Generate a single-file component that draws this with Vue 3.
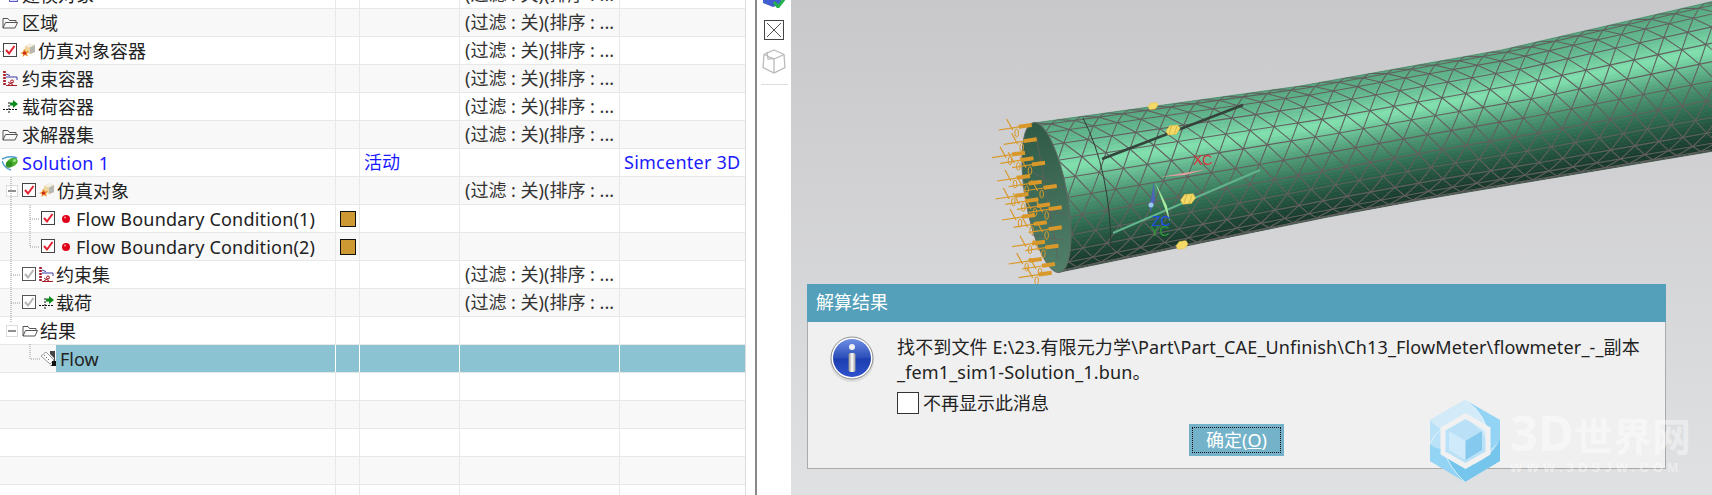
<script setup>
const filter = '(过滤 : 关)(排序 : ...'

const rows = [
  { pad: 3, label: '建模对象', filter: true, icons: ['model'], gap: 4 },
  { pad: 2, label: '区域', filter: true, icons: ['folder'], gap: 4 },
  { pad: 3, label: '仿真对象容器', filter: true, icons: ['check', 'sim'] },
  { pad: 3, label: '约束容器', filter: true, icons: ['cons'], gap: 4 },
  { pad: 3, label: '载荷容器', filter: true, icons: ['load'], gap: 4 },
  { pad: 2, label: '求解器集', filter: true, icons: ['folder'], gap: 4 },
  { pad: 2, label: 'Solution 1', blue: true, status: '活动', solver: 'Simcenter 3D', icons: ['solution'], gap: 4 },
  { pad: 6, label: '仿真对象', filter: true, icons: ['minus', 'check', 'sim'] },
  { pad: 41, label: 'Flow Boundary Condition(1)', swatch: true, icons: ['check', 'dot'] },
  { pad: 41, label: 'Flow Boundary Condition(2)', swatch: true, icons: ['check', 'dot'] },
  { pad: 22, label: '约束集', filter: true, icons: ['checkoff', 'cons'] },
  { pad: 22, label: '载荷', filter: true, icons: ['checkoff', 'load'] },
  { pad: 6, label: '结果', icons: ['minus', 'folder'] },
  { pad: 41, label: 'Flow', selected: true, icons: ['result'] },
  {}, {}, {}, {}, {}
]

// pipe outline, taken from the reference
const topEdge = [[0, 123], [0.37, 86], [0.65, 50], [1, -8]]
const botEdge = [[0, 272], [0.35, 220], [0.5, 200], [1, 140]]

function edgeY(edge, s) {
  for (let i = 1; i < edge.length; i++) {
    if (s <= edge[i][0]) {
      const k = (s - edge[i - 1][0]) / (edge[i][0] - edge[i - 1][0])
      return edge[i - 1][1] + (edge[i][1] - edge[i - 1][1]) * k
    }
  }
  return edge[edge.length - 1][1]
}

function point(s, v, bulge) {
  const tx = 1033 + s * 720
  const bx = 1060 + s * 720
  const c = Math.max(0, Math.min(1, s))
  const ty = edgeY(topEdge, c)
  const by = edgeY(botEdge, c)
  const x = tx + (bx - tx) * v + bulge * Math.sqrt(Math.max(0, v * (1 - v))) * 2
  return [x, ty + (by - ty) * v]
}

const shades = [
  [0, [84, 165, 125]], [0.15, [100, 185, 145]], [0.32, [130, 225, 175]], [0.52, [80, 156, 120]],
  [0.72, [46, 106, 79]], [0.9, [28, 68, 52]], [1, [22, 52, 40]]
]

function shade(v) {
  for (let i = 1; i < shades.length; i++) {
    if (v <= shades[i][0]) {
      const k = (v - shades[i - 1][0]) / (shades[i][0] - shades[i - 1][0])
      const c = shades[i - 1][1].map((a, n) => Math.round(a + (shades[i][1][n] - a) * k))
      return `rgb(${c.join(',')})`
    }
  }
  return 'rgb(22,52,40)'
}

const stations = [0, 0.2, 0.37, 0.5, 0.65, 0.8, 1]
const bands = []
for (let i = 0; i < 40; i++) {
  const a = i / 40
  const b = (i + 1) / 40
  const up = stations.map((s) => point(s, a, 0).join(','))
  const down = stations.slice().reverse().map((s) => point(s, b, 0).join(','))
  bands.push({ fill: shade(a + 0.0125), points: [...up, ...down].join(' ') })
}

const pipeClip = [
  ...stations.map((s) => point(s, 0, 0).join(',')),
  ...stations.slice().reverse().map((s) => point(s, 1, 0).join(','))
].join(' ')

// triangle mesh: lines along the axis and two diagonal families
const N = 12
const cell = 24 / 720
const bulge = 21
const meshLines = []
const lat = (j) => (1 - Math.cos((j / N) * Math.PI)) / 2
for (let j = 1; j < N; j++) {
  const pts = stations.map((s) => point(s, lat(j), bulge).join(','))
  meshLines.push(pts.join(' '))
}
for (let i = -7; i < 32; i++) {
  const left = []
  const right = []
  for (let j = 0; j <= N; j++) {
    left.push(point(i * cell + (j * cell) / 2, lat(j), bulge).join(','))
    right.push(point(i * cell + ((N - j) * cell) / 2, lat(j), bulge).join(','))
  }
  meshLines.push(left.join(' '), right.join(' '))
}

// arrow tips on the pipe's open end
const arrows = [
  [245, 105], [260, 148], [225, 188], [285, 218], [250, 205], [240, 258], [275, 275], [320, 288],
  [235, 312], [265, 328], [300, 343], [335, 352], [255, 375], [290, 397], [335, 412], [285, 455],
  [325, 467], [275, 507], [315, 522], [305, 548]
].map(([x, y]) => ({ x: 950 + x / 3, y: 90 + y / 3 }))

const marks = [
  { x: 1173, y: 130, r: 7 },
  { x: 1188, y: 199, r: 7.5 },
  { x: 1153, y: 106, r: 5 },
  { x: 1182, y: 245, r: 6 }
].map((m) => ({
  ...m,
  points: [[-1, 0.15], [-0.45, -0.6], [0.7, -0.7], [1, -0.15], [0.45, 0.6], [-0.7, 0.7]]
    .map(([a, b]) => `${m.x + a * m.r},${m.y + b * m.r}`)
    .join(' ')
}))
</script>

<template>
  <div class="app">
    <svg class="defs" width="0" height="0">
      <symbol id="model" viewBox="0 0 15 15">
        <rect x="6.500" y="5.500" width="8" height="9" fill="#dfe0f5" stroke="#5a5ac8" />
        <path d="M8 10h5M8 12.500h5" stroke="#5a5ac8" />
      </symbol>
      <symbol id="folder" viewBox="0 0 16 16">
        <path d="M1 13V3.5h5l1.5 2H14v2M1 13l2.5-5.5H15.5L13 13Z" fill="none" stroke="#555" stroke-width="1" />
      </symbol>
      <symbol id="check" viewBox="0 0 15 15">
        <rect x=".5" y=".5" width="13" height="13" fill="#fff" stroke="#444" />
        <path d="M3 7l3 3.5 5.5-7.5" fill="none" stroke="#e3212f" stroke-width="2" />
      </symbol>
      <symbol id="checkoff" viewBox="0 0 15 15">
        <rect x=".5" y=".5" width="13" height="13" fill="#fff" stroke="#555" />
        <path d="M3 7l3 3.5 5.5-7.5" fill="none" stroke="#b5b5b5" stroke-width="2" />
      </symbol>
      <symbol id="minus" viewBox="0 0 12 12">
        <rect x=".5" y=".5" width="11" height="11" fill="#fff" stroke="#ddd" />
        <path d="M2 6h8" stroke="#222" />
      </symbol>
      <symbol id="sim" viewBox="0 0 15 15">
        <path d="M5 3l5-2.500 5 1.500v7l-5 2-5-2Z" fill="#ecd49a" />
        <path d="M5 3l5-2.500 5 1.500-5 2.500Z" fill="#f2efe4" />
        <path d="M10 4.500l5-2.500v7l-5 2Z" fill="#b8b8b0" />
        <path d="M0 10l3-1 1-3.500 2 3 3-.5-2 2.500 1 3-3-1.500-2.500 2 .5-3Z" fill="#ef8a24" />
        <circle cx="4.500" cy="10" r="1.600" fill="#c8281e" />
      </symbol>
      <symbol id="cons" viewBox="0 0 15 15">
        <path d="M1.500 0v15" stroke="#a81c2a" stroke-width="2.600" stroke-dasharray="2 1" />
        <path d="M3 6h11v3" fill="none" stroke="#3a3aa8" />
        <path d="M3 3l4 1.500" stroke="#3a3aa8" />
        <path d="M5 11l5 3M10 11l-5 3M3 14.500h11" stroke="#a81c2a" fill="none" />
        <circle cx="9" cy="10.500" r="1.500" fill="none" stroke="#a81c2a" />
      </symbol>
      <symbol id="load" viewBox="0 0 15 15">
        <path d="M0 10.500h15M6 3v12" stroke="#111" stroke-dasharray="2 1" fill="none" />
        <path d="M7 3.500h3V1l5 4-5 4V6.500H7Z" fill="#0e8a1c" />
      </symbol>
      <symbol id="solution" viewBox="0 0 16 16">
        <path d="M0 4c4-2 10-3 15-1-3 0-5 1-7 2M0 6c2 6 5 8 9 9" fill="none" stroke="#4f9fcf" stroke-width="1.500" />
        <ellipse cx="10" cy="7.500" rx="6" ry="4" transform="rotate(-25 10 7.500)" fill="#49b02c" />
        <circle cx="7" cy="9.500" r="3.200" fill="#2f8f22" />
        <circle cx="12.500" cy="5.500" r="1.600" fill="#9ae27f" />
      </symbol>
      <symbol id="dot" viewBox="0 0 8 8">
        <circle cx="4" cy="4" r="4" fill="#e0001c" />
        <circle cx="3" cy="2.600" r="1" fill="#ff9a9a" />
      </symbol>
      <symbol id="result" viewBox="0 0 15 15">
        <path d="M0 5l5-4 8 8-4 4Z" fill="#fff" stroke="#999" />
        <path d="M3 5l1-1M5 7l1-1M7 9l1-1" stroke="#777" />
        <path d="M9 0h5v15H9l4-3V7L9 3Z" fill="#444" />
        <path d="M11 10h4v5h-4Z" fill="#111" />
      </symbol>
      <linearGradient id="infoFill" x1="0" y1="0" x2="0" y2="1">
        <stop offset="0" stop-color="#6f8fe4" />
        <stop offset=".5" stop-color="#2a4db8" />
        <stop offset=".52" stop-color="#1c3eb0" />
        <stop offset="1" stop-color="#2f52cc" />
      </linearGradient>
      <linearGradient id="infoBar" x1="0" y1="0" x2="1" y2="0">
        <stop offset="0" stop-color="#8b8b8b" />
        <stop offset=".5" stop-color="#fff" />
        <stop offset="1" stop-color="#9a9a9a" />
      </linearGradient>
      <linearGradient id="capFill" x1="0" y1="0" x2="0" y2="1">
        <stop offset="0" stop-color="#2f5a46" />
        <stop offset="1" stop-color="#517f69" />
      </linearGradient>
    </svg>

    <section class="tree">
      <div
        v-for="(row, i) in rows"
        :key="i"
        class="row"
        :class="{ odd: i % 2 === 1, blue: row.blue, selected: row.selected, bc: row.swatch }"
      >
        <div class="cell name" :style="{ paddingLeft: (row.pad || 0) + 'px' }">
          <svg
            v-for="icon in row.icons"
            :key="icon"
            class="icon"
            :class="icon"
            :style="row.gap ? { marginRight: row.gap + 'px' } : null"
          >
            <use :href="'#' + icon" />
          </svg>
          <span class="label">{{ row.label }}</span>
        </div>
        <div class="cell swatch-cell"><span v-if="row.swatch" class="swatch"></span></div>
        <div class="cell status">{{ row.status }}</div>
        <div class="cell filter">{{ row.filter ? filter : '' }}</div>
        <div class="cell solver">{{ row.solver }}</div>
      </div>

      <svg class="guides" width="336" height="495">
        <path
          d="M11 177V323M11 275H21M11 303H21M30 205V247M30 219H40M30 247H40M30 344V359H41M0 51.500H3"
          fill="none"
          stroke="#999"
          stroke-dasharray="1 1"
        />
      </svg>
    </section>

    <div class="spacer"></div>

    <aside class="toolbar">
      <svg class="tool clipped" width="24" height="24" viewBox="0 0 24 24">
        <path d="M1 6l10-4 8 4v14l-8 3-10-4Z" fill="#3f5fd0" />
        <path d="M1 6l10-4 8 4-9 4Z" fill="#8ba4ee" />
        <path d="M12 18l4 5 7-9" fill="none" stroke="#22b14c" stroke-width="3" />
      </svg>
      <svg class="tool" width="20" height="20" viewBox="0 0 20 20">
        <rect x=".5" y=".5" width="19" height="19" fill="#fff" stroke="#444" />
        <path d="M3 3l14 14M17 3L3 17" stroke="#555" />
      </svg>
      <svg class="tool" width="24" height="25" viewBox="0 0 24 25">
        <path d="M12 1l10 4.500 1 13-11 5.500-11-5.500 1-13ZM2 5.500l10 4.500 10-4.500M12 10v14M5 3l1 7 6-.500" fill="none" stroke="#bbb" stroke-width="1.300" />
      </svg>
      <div class="tool-sep"></div>
    </aside>

    <main class="viewport">
      <svg class="scene" width="921" height="495" viewBox="791 0 921 495">
        <clipPath id="pipeClip"><polygon :points="pipeClip" /></clipPath>
        <polygon v-for="(b, i) in bands" :key="i" :points="b.points" :fill="b.fill" :stroke="b.fill" stroke-width=".6" />
        <g clip-path="url(#pipeClip)">
          <polyline v-for="(l, i) in meshLines" :key="i" :points="l" fill="none" stroke="#62605e" stroke-width="1.100" />
          <path d="M1102 159L1243 105" stroke="#34443b" stroke-width="2.500" />
          <path d="M1113 233L1260 170" stroke="#62b48c" stroke-width="2" />
          <path d="M1083 118Q1110 170 1111 248" fill="none" stroke="#2f3a33" stroke-width="1" />
        </g>
        <polyline :points="pipeClip" fill="none" stroke="#5d6b62" stroke-width=".8" clip-path="url(#pipeClip)" />
        <ellipse cx="1046.500" cy="197.500" rx="21" ry="76" transform="rotate(-10 1046.500 197.500)" fill="url(#capFill)" stroke="#5f6a62" />
        <path d="M1036 135L1058 260M1028 170L1066 190M1028 205L1067 215M1032 235L1064 240" stroke="#62605e" stroke-width=".8" />

        <g v-for="(a, i) in arrows" :key="i" fill="none" stroke="#d9992a">
          <path :d="`M${a.x - 33} ${a.y + 5}L${a.x} ${a.y}`" stroke-width="1.200" />
          <path :d="`M${a.x - 13} ${a.y + 1.800}L${a.x} ${a.y}`" stroke-width="4" />
          <path :d="`M${a.x - 25} ${a.y - 6}L${a.x - 19} ${a.y + 5}`" stroke-width="1.200" />
          <ellipse :cx="a.x - 15" :cy="a.y + 8" rx="1.800" ry="4" stroke-width="1" />
        </g>

        <polygon v-for="(m, i) in marks" :key="'m' + i" :points="m.points" fill="#f2d968" stroke="#e8c23c" stroke-width=".5" />
        <path d="M1172 125l-3 9M1177 126l-3 9M1187 194l-3 9M1192 195l-3 9" stroke="#c9a93a" stroke-width=".7" />

        <polygon points="1160,177 1208,169 1185,175" fill="#eb9aa0" />
        <polygon points="1154,182 1150,205 1150,213 1155,200" fill="#4a64b8" />
        <polygon points="1155,182 1170,222 1167,206" fill="#a8e8a0" />
        <circle cx="1151" cy="205" r="2.500" fill="#9cc8f4" />
        <text class="axis" x="1193" y="165" fill="#d8343c">XC</text>
        <text class="axis" x="1152" y="226" fill="#1a50e8">ZC</text>
        <text class="axis" x="1150" y="236" fill="#2f9a3c">YC</text>
      </svg>

      <div class="dialog">
        <header class="dialog-title">解算结果</header>
        <div class="dialog-body">
          <svg class="info" width="46" height="48" viewBox="0 0 46 48">
            <ellipse cx="23" cy="26" rx="22" ry="21" fill="#c9c9c9" opacity=".5" />
            <circle cx="23" cy="23" r="21" fill="#fff" stroke="#8f8f8f" stroke-width="1" />
            <circle cx="23" cy="23" r="19" fill="url(#infoFill)" />
            <circle cx="23" cy="12" r="3" fill="#f2f2f2" />
            <rect x="19.500" y="18" width="7" height="19" rx="2" fill="url(#infoBar)" />
          </svg>
          <div class="message">
            <div class="path">找不到文件 E:\23.有限元力学\Part\Part_CAE_Unfinish\Ch13_FlowMeter\flowmeter_-_副本</div>
            <div class="path">_fem1_sim1-Solution_1.bun。</div>
            <label class="dont-show"><span class="box"></span>不再显示此消息</label>
          </div>
        </div>
        <div class="dialog-actions">
          <button class="ok"><span>确定(<u>O</u>)</span></button>
        </div>
      </div>

      <div class="watermark">
        <svg width="74" height="84" viewBox="0 0 74 84">
          <polygon points="37,1 72,21 72,62 37,83 2,62 2,21" fill="#b9e1f7" />
          <path d="M37 1Q60 15 62 46L54 33 37 17 14 30Q8 28 2 21Z" fill="#d3ebf8" />
          <path d="M37 1L72 21V40Q66 50 42 64L60 50 62 46Q60 15 37 1Z" fill="#93d4f5" />
          <path d="M37 68Q62 62 72 40V62L37 83Q22 70 15 50Z" fill="#76c5ec" />
          <path d="M2 62L37 83Q22 70 15 50Q6 50 2 45Z" fill="#93d3f3" />
          <path d="M2 45Q8 28 37 17M37 1Q60 15 62 46M15 50Q22 70 37 83" fill="none" stroke="#eaf6fc" stroke-width=".8" />
          <polygon points="37.500,17 60,30 60,54 37.500,67 15,54 15,30" fill="none" stroke="#f1f1f1" stroke-width="5" />
          <polygon points="37.500,23 54,32 37.500,42 21,32" fill="#b9e0f6" />
          <polygon points="21,32 37.500,42 37.500,61 21,51" fill="#cfeafa" />
          <polygon points="54,32 37.500,42 37.500,61 54,51" fill="#86c9ee" />
        </svg>
        <div class="mark-text">
          <div class="mark-name"><span class="mark-3d">3D</span>世界网</div>
          <div class="mark-url">WWW.3DSJW.COM</div>
        </div>
      </div>
    </main>
  </div>
</template>

<style>
  html, body {
    margin: 0;
    background: #fff;
    overflow: hidden;
  }
</style>

<style scoped>
  .app {
    display: flex;
    width: 1712px;
    height: 495px;
    overflow: hidden;
    font-family: "Noto Sans", "Noto Sans CJK SC", sans-serif;
    font-size: 18px;
    color: #222;
  }

  .defs {
    position: absolute;
  }

  .tree {
    position: relative;
    flex: none;
    width: 745px;
    height: 495px;
    overflow: hidden;
    border-right: 1px solid #ddd;
  }

  .row {
    display: grid;
    grid-template-columns: 336px 24px 100px 160px 125px;
    height: 28px;
    box-sizing: border-box;
    border-bottom: 1px solid #e8e8e8;
    line-height: 26px;
    background: #fff;
    white-space: nowrap;

    &:first-child {
      margin-top: -19px;
    }

    &.odd {
      background: #f8f8f8;
    }

    &.blue {
      color: #1a1aff;

      .label, .solver {
        letter-spacing: .25px;
      }
    }

    &.bc .label {
      letter-spacing: .2px;
    }

    &.selected {
      .cell {
        background: #8cc3d3;
        border-right-color: #fff;
      }

      .name {
        background: linear-gradient(to right, transparent 56px, #8cc3d3 56px);
      }
    }
  }

  .cell {
    box-sizing: border-box;
    height: 27px;
    border-right: 1px solid #e8e8e8;
    overflow: hidden;

    &:last-child {
      border-right: none;
    }
  }

  .name {
    display: flex;
    align-items: center;
  }

  .status {
    padding-left: 4px;
  }

  .filter {
    padding-left: 5px;
    color: #333;
  }

  .solver {
    padding-left: 4px;
  }

  .swatch-cell {
    display: flex;
    align-items: center;
    justify-content: center;
  }

  .swatch {
    width: 14px;
    height: 14px;
    background: #cc9933;
    border: 1px solid #111;
  }

  .icon {
    flex: none;
    width: 15px;
    height: 15px;
    margin-right: 2px;

    &.folder, &.solution {
      width: 16px;
      height: 16px;
      margin-right: 2px;
    }

    &.minus {
      width: 12px;
      height: 12px;
      margin-right: 4px;
    }

    &.sim {
      margin-right: 3px;
    }

    &.dot {
      width: 8px;
      height: 8px;
      margin-left: 4px;
      margin-right: 8px;
    }

    &.result {
      margin-right: 4px;
    }
  }

  .bc .icon.dot {
    margin-right: 6px;
  }

  .guides {
    position: absolute;
    top: 0;
    left: 0;
    pointer-events: none;
  }

  .spacer {
    flex: none;
    width: 9px;
    background: #fff;
  }

  .toolbar {
    display: flex;
    flex: none;
    flex-direction: column;
    align-items: center;
    width: 34px;
    height: 495px;
    border-left: 2px solid #888;
    background: #fff;
    overflow: hidden;
  }

  .tool {
    flex: none;
    margin-bottom: 9px;

    &.clipped {
      margin-top: -16px;
      margin-bottom: 12px;
    }
  }

  .tool-sep {
    flex: none;
    width: 27px;
    height: 1px;
    margin-top: 1px;
    background: #ddd;
  }

  .viewport {
    position: relative;
    flex: 1;
    height: 495px;
    background: linear-gradient(#c8c8ca, #e0e1e3);
    overflow: hidden;
  }

  .scene {
    display: block;
  }

  .axis {
    font-family: "Liberation Sans", sans-serif;
    font-size: 14px;
  }

  .dialog {
    position: absolute;
    top: 284px;
    left: 16px;
    box-sizing: border-box;
    width: 859px;
    height: 185px;
    background: #f0f0f0;
    border: 1px solid #aaa;
    border-top: none;
  }

  .dialog-title {
    height: 38px;
    margin: 0 -1px;
    padding-left: 9px;
    background: #54a0ba;
    color: #fff;
    line-height: 37px;
  }

  .dialog-body {
    display: flex;
    padding: 13px 0 0 21px;
  }

  .info {
    flex: none;
    margin-right: 22px;
    margin-top: 0;
  }

  .message {
    line-height: 25px;
    color: #222;
    white-space: nowrap;
  }

  .path {
    letter-spacing: .15px;
  }

  .dont-show {
    display: flex;
    align-items: center;
    margin-top: 6px;
    height: 24px;
  }

  .box {
    width: 20px;
    height: 20px;
    margin-right: 4px;
    background: #fff;
    border: 1px solid #333;
  }

  .dialog-actions {
    display: flex;
    justify-content: flex-start;
    padding: 9px 0 0 381px;
  }

  .ok {
    width: 95px;
    height: 32px;
    padding: 3px;
    border: none;
    background: #73b2c8;
    color: #fff;
    font: inherit;

    span {
      display: block;
      height: 100%;
      box-sizing: border-box;
      border: 1px dotted #111;
      line-height: 24px;
    }
  }

  .watermark {
    position: absolute;
    top: 399px;
    left: 637px;
    display: flex;
    gap: 8px;
  }

  .mark-text {
    padding-top: 11px;
    color: rgba(255, 255, 255, .42);
    white-space: nowrap;
  }

  .mark-name {
    font-size: 39px;
    font-weight: 700;
    line-height: 44px;
  }

  .mark-3d {
    font-size: 49px;
  }

  .mark-url {
    margin-top: 3px;
    font-family: "Liberation Sans", sans-serif;
    font-size: 13px;
    font-weight: 700;
    letter-spacing: 4.2px;
    line-height: 14px;
  }
</style>
